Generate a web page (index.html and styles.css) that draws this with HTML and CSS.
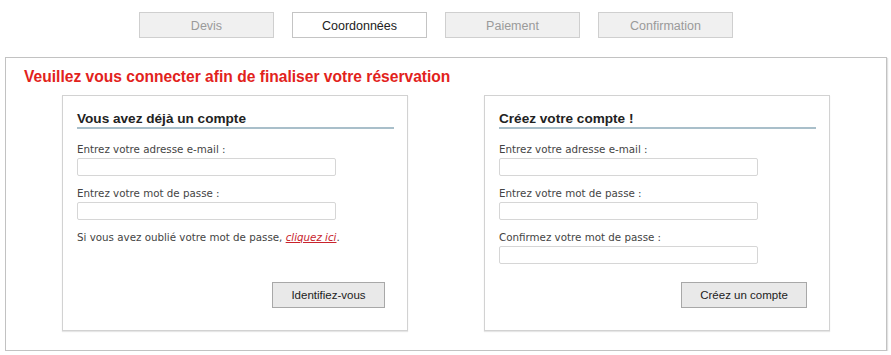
FILE: index.html
```html
<!DOCTYPE html>
<html lang="fr">
<head>
<meta charset="UTF-8" />
<title>Réservation - Coordonnées</title>
<link rel="stylesheet" href="styles.css">
</head>
<body>

  <!-- Etapes de la reservation -->
  <div class="etapes">
    <div class="etape">Devis</div>
    <div class="etape active">Coordonnées</div>
    <div class="etape">Paiement</div>
    <div class="etape">Confirmation</div>
  </div>

  <div class="cadre">
    <h1 class="titre">Veuillez vous connecter afin de finaliser votre réservation</h1>

    <div class="colonnes">
      <form class="bloc" onsubmit="return false;">
        <h2>Vous avez déjà un compte</h2>
        <label for="login-mail">Entrez votre adresse e-mail :</label>
        <input id="login-mail" type="text" />
        <label for="login-pass">Entrez votre mot de passe :</label>
        <input id="login-pass" type="password" />
        <p class="oubli">Si vous avez oublié votre mot de passe, <a href="#">cliquez ici</a>.</p>
        <button type="submit" class="btn-login">Identifiez-vous</button>
      </form>

      <form class="bloc" onsubmit="return false;">
        <h2>Créez votre compte !</h2>
        <label for="new-mail">Entrez votre adresse e-mail :</label>
        <input id="new-mail" type="text" />
        <label for="new-pass">Entrez votre mot de passe :</label>
        <input id="new-pass" type="password" />
        <label for="new-pass2">Confirmez votre mot de passe :</label>
        <input id="new-pass2" type="password" />
        <button type="submit" class="btn-creer">Créez un compte</button>
      </form>
    </div>
  </div>

</body>
</html>
```

FILE: styles.css
```css
/* BASE */
* {
  box-sizing: border-box;
}
body {
  margin: 0;
  background: #fff;
  font-family: "Liberation Sans", Arial, sans-serif;
  color: #333;
}

/* ETAPES */
.etapes {
  display: flex;
  gap: 18px;
  padding: 12px 0 0 139px;
}
.etape {
  width: 135px;
  height: 26px;
  line-height: 27px;
  text-align: center;
  font-size: 12.5px;
  color: #9a9a9a;
  background: #f0f0f0;
  border: 1px solid #cfcfcf;
}
.etape.active {
  background: #fff;
  color: #222;
  border-color: #c4c4c4;
}

/* CADRE PRINCIPAL */
.cadre {
  margin: 19px 0 0 5px;
  width: 882px;
  height: 294px;
  border: 1px solid #c2c2c2;
  box-shadow: 1px 1px 1px #e2e2e2;
  padding: 10px 0 0 18px;
}
.titre {
  margin: 0;
  font-size: 15.6px;
  line-height: 18px;
  font-weight: bold;
  color: #e2221c;
}

.colonnes {
  display: flex;
  gap: 76px;
  margin: 9px 0 0 38px;
}

/* BLOCS */
.bloc {
  width: 346px;
  height: 236px;
  border: 1px solid #d2d2d2;
  box-shadow: 0 1px 1px #e6e6e6;
  padding: 14px 13px 22px 14px;
  display: flex;
  flex-direction: column;
  align-items: flex-start;
}
.bloc h2 {
  align-self: stretch;
  margin: 0 0 13px 0;
  font-size: 13.6px;
  line-height: 16px;
  padding: 1px 0 0 0;
  color: #222;
  border-bottom: 2px solid #a9bfca;
}
.bloc label,
.oubli {
  font-family: "DejaVu Sans", Verdana, sans-serif;
  font-size: 10.3px;
  line-height: 14px;
  color: #444;
}
.bloc input {
  width: 259px;
  height: 18px;
  margin: 2px 0 10px 0;
  border: 1px solid #d6d6d6;
  border-radius: 2px;
  background: #fff;
  outline: none;
}
.oubli {
  margin: 0;
}
.oubli a {
  color: #c8232c;
  font-style: italic;
}

/* BOUTONS */
.bloc button {
  margin-top: auto;
  margin-right: 9px;
  align-self: flex-end;
  height: 26px;
  font-family: "Liberation Sans", Arial, sans-serif;
  font-size: 11.5px;
  color: #222;
  background: #e9e9e9;
  border: 1px solid #a8a8a8;
  cursor: pointer;
}
.btn-login {
  width: 113px;
}
.btn-creer {
  width: 126px;
}
```
